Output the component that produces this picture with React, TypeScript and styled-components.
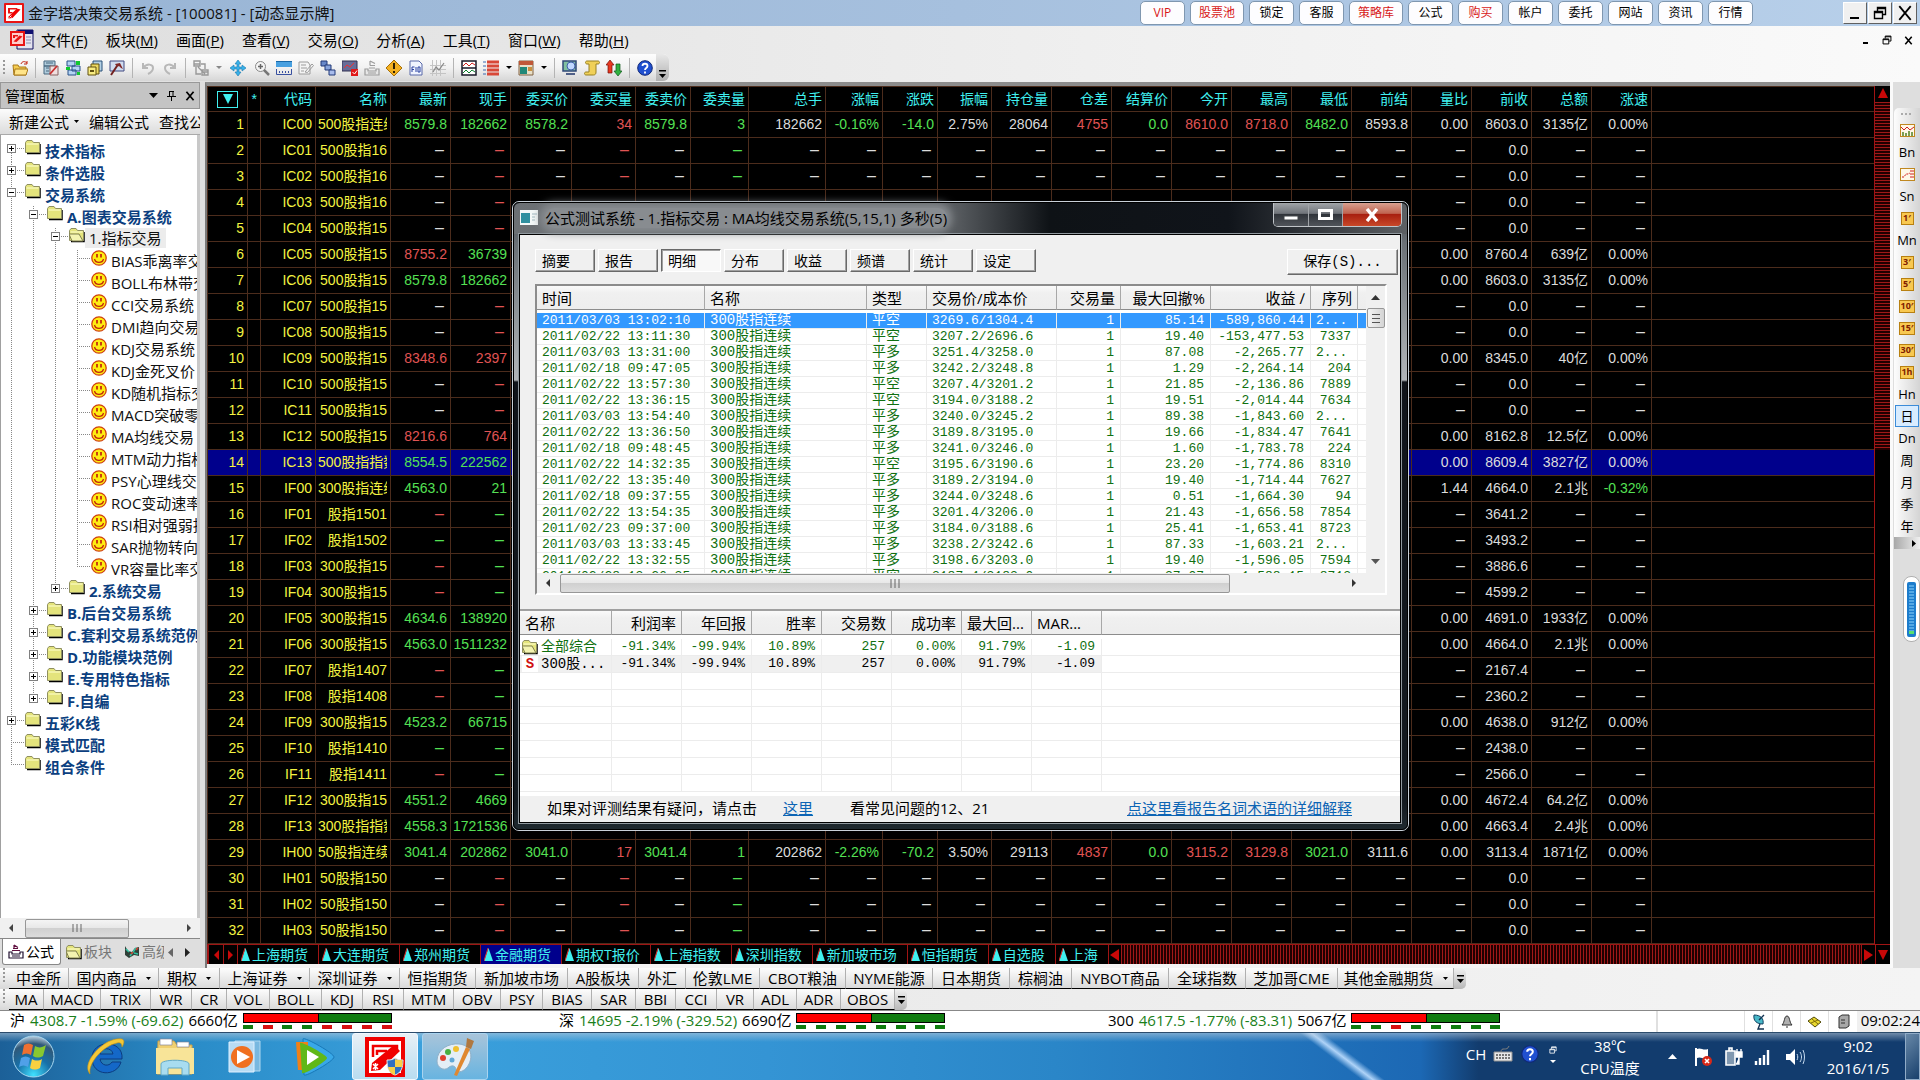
import React from "react";
import styled, { createGlobalStyle, css } from "styled-components";

const UI = `"Open Sans", "Noto Sans CJK SC", sans-serif`;
const GRID = `"Liberation Sans", "Noto Sans CJK SC", sans-serif`;
const MONO = `"Liberation Mono", "Noto Sans CJK SC", monospace`;

const C: Record<string, string> = {
  g: "#54e054",
  r: "#e05454",
  w: "#dcdcdc",
  y: "#f4f442",
  c: "#40f0f0",
};
const GRID_LINE = "#4c2c1c";

const Global = createGlobalStyle`
  *, *::before, *::after { box-sizing: border-box; }
  html, body { margin: 0; padding: 0; background: #f0f0f0; }
  body { font-family: ${UI}; font-size: 15px; line-height: 20px; color: #000; overflow-x: hidden; }
  button { font: inherit; color: inherit; margin: 0; padding: 0; border: 0; background: none; white-space: nowrap; }
  table { border-collapse: separate; border-spacing: 0; table-layout: fixed; }
  th { font-weight: 400; }
  th, td { padding: 0; }
  svg { display: block; flex: none; }
`;

const Screen = styled.div`
  position: relative;
  display: flex;
  flex-direction: column;
  min-height: 100vh;
  overflow: hidden;
`;

/* ---------- title bar ---------- */
const TitleBar = styled.header`
  display: flex;
  align-items: center;
  height: 26px;
  padding: 0 3px 0 4px;
  background: linear-gradient(90deg, #98b4d4, #a6c0de 50%, #b8d0ea);
`;
const Title = styled.h1`
  margin: 0 auto 0 4px;
  font-size: 15px;
  font-weight: 400;
  color: #111;
`;
const Quick = styled.nav`
  display: flex;
  gap: 5px;
  margin-right: 90px;
`;
const QuickButton = styled.button<{ $hot?: boolean }>`
  min-width: 45px;
  height: 24px;
  padding: 0 8px;
  border: 1px solid #7f97b0;
  border-radius: 5px;
  background: #fdfdff;
  font-size: 12px;
  line-height: 20px;
  color: ${(p) => (p.$hot ? "#d81818" : "#000")};
`;
const SysButtons = styled.div<{ $flat?: boolean }>`
  display: flex;
  gap: ${(p) => (p.$flat ? "5px" : "1px")};
  button {
    display: grid;
    place-items: center;
    width: ${(p) => (p.$flat ? "16px" : "24px")};
    height: ${(p) => (p.$flat ? "16px" : "22px")};
    ${(p) =>
      !p.$flat &&
      css`
        background: #f0f0f0;
        border: 1px solid;
        border-color: #fff #606060 #606060 #fff;
      `}
  }
`;

/* ---------- menu and toolbar ---------- */
const MenuBar = styled.nav`
  display: flex;
  align-items: center;
  height: 28px;
  padding: 0 4px 0 10px;
  background: linear-gradient(90deg, #dedede, #f0f0f0 60%, #fafafa);
`;
const MenuItem = styled.button`
  margin-right: 18px;
  line-height: 24px;
  &:first-of-type { margin-left: 7px; }
`;
const Spacer = styled.div`
  flex: 1;
`;
const ToolArea = styled.div`
  height: 28px;
  background: linear-gradient(90deg, #dedede, #f0f0f0 60%, #fafafa);
`;
const ToolStrip = styled.div`
  display: inline-flex;
  align-items: center;
  height: 27px;
  border-radius: 0 6px 6px 0;
  background: linear-gradient(#fdfdfd, #f2f2f2 50%, #d6d6d6);
`;
const Grip = styled.span`
  width: 2px;
  height: 16px;
  margin: 0 4px 0 3px;
  background: repeating-linear-gradient(#999 0 2px, transparent 2px 4px);
`;
const Tool = styled.button<{ $w?: number }>`
  display: grid;
  place-items: center;
  width: ${(p) => p.$w ?? 22}px;
  height: 24px;
`;
const Sep = styled.span`
  width: 1px;
  height: 20px;
  margin: 0 4px;
  background: #b4b4b4;
`;
const EndCap = styled.button`
  display: grid;
  place-items: end center;
  width: 13px;
  height: 27px;
  padding-bottom: 3px;
  border-radius: 0 6px 6px 0;
  background: linear-gradient(#e8e8e8, #b0b0b0);
`;

/* ---------- middle ---------- */
const Main = styled.main`
  display: flex;
  flex: 1;
  background: #dedede;
`;
const Panel = styled.aside`
  display: flex;
  flex-direction: column;
  width: 200px;
  overflow: hidden;
  flex: none;
`;
const PanelHead = styled.div`
  display: flex;
  align-items: center;
  gap: 9px;
  height: 27px;
  padding: 0 4px;
  border: 1px solid #989898;
  background: #c4c4c4;
  h2 { margin: 0 auto 0 0; font-size: 15px; font-weight: 400; }
`;
const PanelTools = styled.div`
  display: flex;
  align-items: center;
  gap: 10px;
  height: 26px;
  padding-left: 9px;
  border-bottom: 1px solid #aaa;
  background: linear-gradient(#fcfcfc, #dcdcdc);
  overflow: hidden;
  button { display: flex; align-items: center; gap: 5px; }
`;
const Tree = styled.ul`
  flex: 1;
  margin: 0;
  padding: 5px 0 0;
  list-style: none;
  background: #fff;
  border: solid #a0a0a0;
  border-width: 0 3px 0 1px;
  border-right-color: #c8c8c8;
  overflow: hidden;
`;
const TreeRow = styled.li<{ $leaf: boolean; $open: boolean }>`
  display: flex;
  height: 22px;
  margin-left: -1px;
  white-space: nowrap;
  font-weight: ${(p) => (p.$leaf || p.$open ? 400 : 700)};
  color: ${(p) => (p.$leaf || p.$open ? "#111" : "#0c3f80")};
  span {
    margin-top: ${(p) => (p.$open ? "0" : "1px")};
    padding: 0 4px;
    height: 20px;
    line-height: 20px;
    background: ${(p) => (p.$open ? "#ececec" : "none")};
  }
`;
const HScroll = styled.div`
  display: flex;
  align-items: center;
  height: 20px;
  padding: 0 9px;
  background: #f0f0f0;
  justify-content: space-between;
`;
const Thumb = styled.div<{ $grow: number }>`
  display: grid;
  place-items: center;
  flex: ${(p) => p.$grow};
  height: 19px;
  border: 1px solid #979797;
  border-radius: 2px;
  background: linear-gradient(#f4f4f4, #e8e8e8 45%, #d0d0d0 50%, #dcdcdc);
`;
const Rest = styled.div<{ $grow: number }>`
  flex: ${(p) => p.$grow};
`;
const PanelTabs = styled.div`
  display: flex;
  align-items: flex-start;
  height: 30px;
  padding-left: 2px;
  border-top: 1px solid #888;
  font-size: 14px;
  color: #777;
`;
const PanelTab = styled.button<{ $on?: boolean; $w: number }>`
  display: flex;
  align-items: center;
  gap: 2px;
  width: ${(p) => p.$w}px;
  height: 26px;
  padding-left: 5px;
  overflow: hidden;
  ${(p) =>
    p.$on &&
    css`
      color: #000;
      background: #fff;
      border: 1px solid #888;
      border-top: 0;
      border-radius: 0 0 3px 3px;
    `}
`;
const PanelArrows = styled.div`
  display: flex;
  align-items: center;
  gap: 12px;
  height: 26px;
  padding-left: 4px;
`;

const Quotes = styled.section`
  flex: 1;
  min-width: 0;
  margin-left: 5px;
  border: solid #7a7a7a;
  border-width: 4px 0 0 2px;
  background: #000;
  border-top-color: #8c8c8c;
  display: flex;
  flex-direction: column;
`;
const QuoteBody = styled.div`
  display: flex;
`;
const QuoteTable = styled.table`
  flex: 1;
  width: 0;
  font-family: ${GRID};
  font-size: 14px;
  line-height: 25px;
  border-left: 1px solid ${GRID_LINE};
  border-top: 1px solid ${GRID_LINE};
  th, td {
    height: 26px;
    border-right: 1px solid ${GRID_LINE};
    border-bottom: 1px solid ${GRID_LINE};
    text-align: right;
    white-space: nowrap;
  }
  th { color: ${C.c}; height: 25px; }
  th > div { height: 24px; }
  th:last-child, td:last-child { border-right: 0; }
`;
const QuoteRow = styled.tr<{ $on: boolean }>`
  background: ${(p) => (p.$on ? "#00008c" : "transparent")};
`;
const Cell = styled.div<{ $c: string }>`
  padding: 0 3px 0 2px;
  height: 25px;
  overflow: hidden;
  color: ${(p) => C[p.$c]};
`;
const Clip = styled.div`
  overflow: hidden;
`;
const Dash = styled.span`
  font-size: 16px;
  line-height: 20px;
  padding-right: 3px;
`;
const FilterButton = styled.button`
  display: grid;
  place-items: center;
  width: 21px;
  height: 17px;
  margin: 0 9px;
  border: 1px solid ${C.c};
`;
const VRail = styled.div`
  display: flex;
  flex-direction: column;
  align-items: center;
  width: 16px;
  padding-top: 2px;
  border-left: 1px solid #a01414;
`;
const VHatch = styled.div`
  width: 15px;
  height: 348px;
  margin-top: 2px;
  background: repeating-linear-gradient(#a01818 0 1px, #200000 1px 3px);
`;
const MarketTabs = styled.div`
  display: flex;
  height: 20px;
  border-top: 1px solid #a01414;
  border-left: 1px solid #a01414;
  font-size: 14px;
  line-height: 18px;
  color: ${C.c};
`;
const MarketTab = styled.button<{ $on?: boolean }>`
  display: flex;
  align-items: center;
  gap: 2px;
  padding: 0 10px 0 3px;
  border-left: 1px solid #a01414;
  background: ${(p) => (p.$on ? "#00008c" : "none")};
`;
const Arrow = styled.button<{ $w: number }>`
  display: grid;
  place-items: center;
  width: ${(p) => p.$w}px;
  border-left: 1px solid #a01414;
`;
const HHatch = styled.div`
  flex: 1;
  background: repeating-linear-gradient(90deg, #a01818 0 1px, #200000 1px 3px);
`;
const Below = styled.div`
  flex: 1;
  min-height: 3px;
  background: #f4f4f4;
`;

const Rail = styled.aside`
  width: 30px;
  flex: none;
  padding: 26px 0 0 4px;
  border-left: 3px solid #fafafa;
  background: #dedede;
  overflow: hidden;
`;
const RailStrip = styled.div`
  display: flex;
  flex-direction: column;
  align-items: center;
  border-radius: 5px 0 0 5px;
  margin-left: -3px;
  background: linear-gradient(90deg, #fdfdfd, #e4e4e4 60%, #d4d4d4);
`;
const RailDots = styled.span`
  width: 12px;
  height: 2px;
  margin: 5px 0 4px;
  background: repeating-linear-gradient(90deg, #aaa 0 2px, transparent 2px 4px);
`;
const RailButton = styled.button<{ $on?: boolean }>`
  display: grid;
  place-items: center;
  width: 24px;
  height: 22px;
  font-size: 13px;
  line-height: 18px;
  ${(p) => p.$on && "border: 1px solid #3c8cd8; background: #d8ecff;"}
`;
const Period = styled.span`
  display: grid;
  place-items: center;
  min-width: 13px;
  height: 13px;
  border: 1px solid #b88010;
  background: #f8c850;
  font-size: 9px;
  font-weight: 700;
  line-height: 10px;
  color: #802000;
`;
const RailEnd = styled.div`
  display: flex;
  justify-content: flex-end;
  align-items: center;
  width: 26px;
  height: 12px;
  padding-right: 4px;
  background: linear-gradient(90deg, #a8a8a8, #f0f0f0);
`;
const Gauge = styled.div`
  width: 17px;
  height: 66px;
  margin: 27px 0 0 6px;
  padding: 5px 3px;
  border: 1px solid #b0b0b0;
  border-radius: 8px;
  background: #fff;
  div {
    height: 55px;
    border: solid #1c7ccc;
    border-width: 3px 2px;
    border-radius: 2px;
    background: linear-gradient(transparent 46px, #58e070 46px), repeating-linear-gradient(#54a8e4 0 2px, #1c7ccc 2px 3px);
  }
`;

/* ---------- lower bars ---------- */
const LinkBar = styled.nav`
  display: flex;
  align-items: flex-start;
  background: linear-gradient(90deg, #e4e4e4, #f4f4f4);
`;
const LinkStrip = styled.div`
  display: flex;
  align-items: stretch;
  background: linear-gradient(#fdfdfd, #d8d8d8);
  border-radius: 0 5px 5px 0;
`;
const BarItem = styled.button<{ $w: number }>`
  display: flex;
  align-items: center;
  justify-content: center;
  gap: 9px;
  width: ${(p) => p.$w}px;
  height: 21px;
  border-bottom: 1px solid #000;
  border-right: 1px solid #b0b0b0;
  line-height: 20px;
`;
const BarEnd = styled.button`
  display: grid;
  place-items: center;
  width: 12px;
  height: 21px;
  border-radius: 0 5px 5px 0;
  background: linear-gradient(#f0f0f0, #b8b8b8);
`;
const StatusBar = styled.footer`
  display: flex;
  height: 22px;
  border-top: 1px solid #888;
  background: #fff;
  line-height: 19px;
  overflow: hidden;
`;
const Sections = styled.div`
  display: flex;
  flex: 1;
  margin-right: 9px;
`;
const Section = styled.div`
  display: flex;
  flex: 1;
  gap: 5px;
  padding-left: 10px;
  white-space: nowrap;
  em { font-style: normal; color: #1a801a; }
`;
const Breadth = styled.div`
  padding-top: 2px;
`;
const Split = styled.div`
  display: flex;
  width: 149px;
  height: 10px;
  border: 1px solid #000;
  background: linear-gradient(90deg, #f00 0 74px, #000 74px 75px, #107c10 75px);
`;
const Marks = styled.div`
  display: flex;
  justify-content: space-between;
  padding-top: 2px;
`;
const Mark = styled.i<{ $up: boolean }>`
  width: 10px;
  height: 4px;
  background: ${(p) => (p.$up ? "#d81010" : "#107c10")};
`;
const StatusIcons = styled.div`
  display: flex;
  width: 264px;
  padding-left: 86px;
  border-left: 2px solid #e0e0e0;
  span { display: grid; place-items: center; width: 30px; border-left: 1px solid #e0e0e0; }
  time { padding-left: 4px; background: #f0f0f0; }
`;

/* ---------- taskbar ---------- */
const Taskbar = styled.footer`
  display: flex;
  align-items: stretch;
  height: 48px;
  border-top: 1px solid #2c4c6c;
  color: #fff;
  background:
    linear-gradient(rgba(190, 205, 220, 0.55), rgba(190, 205, 220, 0) 9px),
    linear-gradient(90deg, transparent 74%, #123c6e 77%),
    linear-gradient(37deg, transparent 38px, rgba(190, 222, 255, 0.9) 45px, transparent 52px) 1300px 0 / 100px 48px no-repeat,
    linear-gradient(90deg, #1c6098, #2a8cc8 10%, #3aa0dc 22%, #3494d4 40%, #2a86c8 55%, #1c68b4 74%);
`;
const Start = styled.button`
  width: 72px;
  padding-left: 12px;
`;
const Tasks = styled.div`
  display: flex;
  gap: 4px;
`;
const Task = styled.button<{ $state?: "active" | "open" }>`
  display: grid;
  place-items: center;
  width: 66px;
  border-radius: 3px;
  ${(p) => p.$state === "active" && "border: 1px solid #f0f8ff; background: linear-gradient(#e8f0f6, #b8dcf0);"}
  ${(p) => p.$state === "open" && "border: 1px solid #a8d4f0; background: linear-gradient(#a8c4da, #68b4e0);"}
`;
const Tray = styled.div`
  display: flex;
  margin-left: auto;
  font-size: 15px;
  text-align: center;
`;
const TrayItem = styled.div<{ $w: number; $high?: boolean }>`
  display: grid;
  place-content: center;
  justify-items: center;
  gap: 6px;
  width: ${(p) => p.$w}px;
  padding-bottom: ${(p) => (p.$high ? "5px" : "0")};
  line-height: 16px;
`;
const Lines = styled.div<{ $w: number }>`
  width: ${(p) => p.$w}px;
  padding-top: 2px;
  line-height: 22px;
`;
const Peek = styled.button`
  width: 15px;
  border: 1px solid #90acc8;
  background: linear-gradient(135deg, #6888a8, #18406c);
`;

/* ---------- dialog ---------- */
const Dialog = styled.section`
  position: absolute;
  left: 512px;
  top: 201px;
  width: 897px;
  padding: 1px 7px 7px 6px;
  border: 1px solid #c8d0d8;
  border-radius: 7px;
  outline: 1px solid #000;
  outline-offset: -2px;
  background: linear-gradient(#3a4046, #6a7076 40px, #a8acb0 160px, #b0b4b8 178px, #10141a 180px, #141a20 600px, #202a30);
`;
const DialogTitle = styled.div`
  display: flex;
  align-items: center;
  height: 31px;
  margin: 0 -6px 0 -5px;
  padding: 0 0 2px 6px;
  border-radius: 6px 6px 0 0;
  background: linear-gradient(90deg, #6c7074, #54585c 50%, #0e1216 60%, #10141a 80%, #5c6064);
  h2 {
    margin: 0 auto 0 7px;
    font-size: 15px;
    font-weight: 400;
    color: #000;
    border-radius: 9px;
    background: #888c90;
    box-shadow: 0 0 8px 5px #888c90;
    line-height: 20px;
  }
`;
const CaptionButtons = styled.div`
  display: flex;
  align-self: flex-start;
  margin-right: 5px;
  border: 1px solid #c0c4c8;
  border-top: 0;
  border-radius: 0 0 5px 5px;
  overflow: hidden;
`;
const Caption = styled.button<{ $close?: boolean }>`
  display: grid;
  place-items: center;
  width: ${(p) => (p.$close ? 59 : 34)}px;
  height: 23px;
  border-left: 1px solid #a0a4a8;
  background: ${(p) =>
    p.$close ? "linear-gradient(#d8a090, #c06450 45%, #a82010 50%, #c84828)" : "linear-gradient(#a0a4a8, #70747a 45%, #30343a 50%, #50545a)"};
  &:first-child { border-left: 0; }
`;
const DialogBody = styled.div`
  border: 1px solid #000;
  outline: 1px solid #90989e;
  background: #f0f0f0;
`;
const DialogTools = styled.div`
  display: flex;
  align-items: flex-start;
  justify-content: space-between;
  padding: 14px 2px 9px 15px;
  font-size: 14px;
`;
const Tabs = styled.div`
  display: flex;
  gap: 3px;
`;
const raised = css`
  border: 1px solid;
  border-color: #fff #696969 #696969 #fff;
  box-shadow: inset -1px -1px #a0a0a0;
`;
const Tab = styled.button<{ $on?: boolean }>`
  width: 60px;
  height: 23px;
  padding-left: 6px;
  text-align: left;
  line-height: 18px;
  ${raised}
  ${(p) =>
    p.$on &&
    css`
      border-color: #696969 #fff #fff #696969;
      box-shadow: inset 1px 1px #a0a0a0;
      background: #f8f8f8;
    `}
`;
const Save = styled.button`
  width: 111px;
  height: 26px;
  font-family: ${MONO};
  ${raised}
`;
const ListFrame = styled.div`
  margin: 0 13px 0 15px;
  border: 2px solid;
  border-color: #8c8c8c #fff #fff #8c8c8c;
  background: #fff;
`;
const ListTop = styled.div`
  display: flex;
  height: 287px;
`;
const ListClip = styled.div`
  flex: 1;
  min-width: 0;
  overflow: hidden;
`;
const ListTable = styled.table<{ $pitch: number; $lead: number }>`
  width: 100%;
  font-family: ${MONO};
  font-size: 13px;
  line-height: ${(p) => p.$pitch - 1}px;
  th {
    height: 24px;
    font-family: ${UI};
    font-size: 15px;
    line-height: 20px;
    text-align: left;
    border-right: 1px solid #a8a8a8;
    border-bottom: 1px solid #8c8c8c;
    background: linear-gradient(#fafafa, #f0f0f0 30%, #ededed);
    padding: 0 5px;
    white-space: nowrap;
    overflow: hidden;
  }
  td {
    height: ${(p) => p.$pitch}px;
    padding: 0 6px 0 5px;
    white-space: nowrap;
    overflow: hidden;
    border-right: 1px solid #ececec;
    border-bottom: 1px solid #ececec;
  }
  th:last-child, td:last-child { border-right: 0; }
  tbody::before { content: ""; display: block; height: ${(p) => p.$lead}px; }
`;
const TradeRow = styled.tr<{ $on: boolean }>`
  color: ${(p) => (p.$on ? "#fff" : "#107010")};
  background: ${(p) => (p.$on ? "#3399ff" : "#fff")};
`;
const Num = styled.td`
  text-align: right;
`;
const NumHead = styled.th`
  && { text-align: right; }
`;
const Cjk = styled.td`
  font-size: 14px;
`;
const VScroll = styled.div`
  display: flex;
  flex-direction: column;
  align-items: center;
  width: 19px;
  padding: 9px 0;
  background: #f0f0f0;
`;
const VThumb = styled.div`
  display: grid;
  place-items: center;
  width: 18px;
  height: 20px;
  margin: 8px 0 auto;
  border: 1px solid #979797;
  border-radius: 2px;
  background: linear-gradient(90deg, #f4f4f4, #d4d4d4);
`;
const Summary = styled.div`
  margin-top: 14px;
  height: 187px;
  border-top: 2px solid #a0a0a0;
  background: #fff;
  overflow: hidden;
`;
const SummaryRow = styled.tr<{ $tone: string }>`
  color: ${(p) => (p.$tone === "green" ? "#107010" : "#000")};
  td:not(:last-child) { background: ${(p) => (p.$tone === "sel" ? "#f0f0f0" : "#fff")}; }
`;
const NameCell = styled.div`
  display: flex;
  align-items: center;
  gap: 3px;
  margin: 0 -5px 0 -3px;
  font-size: 14px;
  b { width: 16px; background: #fff; color: #d01010; text-align: center; }
`;
const DialogFoot = styled.div`
  display: flex;
  align-items: center;
  height: 26px;
  padding: 0 48px 2px 27px;
  a { color: #0c64b4; }
  a:last-child { margin-left: auto; }
  span { margin: 0 35px 0 0; }
  a + span { margin-left: 37px; }
  span:first-child { margin-right: 26px; }
`;

/* ---------- drawings ---------- */
const Tri = ({ d, s = 7, c = "#000" }: { d: "u" | "d" | "l" | "r"; s?: number; c?: string }) => {
  const h = Math.ceil(s / 2);
  const wide = d === "u" || d === "d";
  const pts = {
    u: `0,${h} ${s},${h} ${s / 2},0`,
    d: `0,0 ${s},0 ${s / 2},${h}`,
    l: `${h},0 ${h},${s} 0,${s / 2}`,
    r: `0,0 0,${s} ${h},${s / 2}`,
  }[d];
  return (
    <svg width={wide ? s : h} height={wide ? h : s} aria-hidden>
      <polygon points={pts} fill={c} />
    </svg>
  );
};
const BigTri = ({ d, c = "#c80808" }: { d: "u" | "d" | "l" | "r"; c?: string }) => {
  const pts = { u: "1,10 11,10 6,0", d: "1,1 11,1 6,11", l: "10,0 10,12 1,6", r: "1,0 1,12 10,6" }[d];
  return (
    <svg width="12" height="12" aria-hidden>
      <polygon points={pts} fill={c} />
    </svg>
  );
};
const AppIcon = ({ size }: { size: number }) => (
  <svg width={size} height={size} viewBox="0 0 20 20" aria-hidden>
    <rect width="20" height="20" rx="1" fill="#e81414" />
    <rect x="2" y="2" width="16" height="16" fill="#fff" />
    <path d="M4 5h9v1.500H6V9h3l-1.500 1.500H4z" fill="#e81414" />
    <path d="M4.500 13.500 13 5.500l3.500 1-8 8.500-4 .5z" fill="#f00000" />
    <path d="m5.500 12.500 2 2m0-2-2 2" stroke="#fff" strokeWidth=".8" />
  </svg>
);
const DocIcon = () => (
  <svg width="24" height="22" viewBox="0 0 24 22" aria-hidden>
    <path d="M8 1h15v19H7V1z" fill="#e4e4ee" stroke="#101060" />
    <path d="M8 1h15v4H8z" fill="#101070" />
    <path d="M16 8h5M16 11h5M16 14h5" stroke="#8c8cb0" />
    <rect x="0" y="2" width="15" height="15" fill="#e81414" />
    <rect x="2" y="4" width="11" height="11" fill="#fcc" />
    <path d="m3.500 12.500 6-6 3 1-6 5.500z" fill="#e81414" />
    <path d="M3 6h5v1.500H5V9H3z" fill="#e81414" />
  </svg>
);
const MinGlyph = ({ flat }: { flat?: boolean }) => (
  <svg width="14" height="14" viewBox="0 0 14 14" aria-hidden>
    <path d={flat ? "M4 10h5" : "M2 12h9"} stroke="#000" strokeWidth="2" />
  </svg>
);
const RestoreGlyph = ({ s = 14, c = "#000" }: { s?: number; c?: string }) => (
  <svg width={s} height={s} viewBox="0 0 14 14" aria-hidden>
    <path d="M4.500 5V1.500h8v7H10M4.500 2.500h8M1.500 5.500h8v7h-8zM1.500 6.500h8" fill="none" stroke={c} strokeWidth="1.400" />
  </svg>
);
const CloseGlyph = ({ s = 14, c = "#000", w = 2 }: { s?: number; c?: string; w?: number }) => (
  <svg width={s} height={s} viewBox="0 0 14 14" aria-hidden>
    <path d="m2 1 10 12M12 1 2 13" stroke={c} strokeWidth={w} />
  </svg>
);
const MoreGlyph = () => (
  <svg width="7" height="8" aria-hidden>
    <path d="M0 0h7v1.500H0zM0 4h7L3.500 8z" fill="#000" />
  </svg>
);

const toolArt: Record<string, React.ReactNode> = {
  open: (
    <>
      <path d="M1 5h5l1 2h7v8H2z" fill="#f4cc50" stroke="#a87818" />
      <path d="M3 9h13l-2 6H2z" fill="#ffe488" stroke="#a87818" />
      <path d="M9 4c1-3 4-3 6-1m0-2v3h-3" fill="none" stroke="#c02010" />
    </>
  ),
  sheet: (
    <>
      <path d="M1 1h11v5H1zM1 6h7v8H1z" fill="#b0ccdc" stroke="#486880" />
      <path d="M3 3h7M3 8h3M3 11h3" stroke="#486880" />
      <path d="M7 6h8v9H7z" fill="#f0e0e0" stroke="#886060" />
      <path d="m7 14 7-8" stroke="#c83030" strokeWidth="1.800" />
    </>
  ),
  net: (
    <>
      <path d="M2 1h8v5H2zM7 6h8v5H7zM3 10h8v5H3z" fill="#b4d4f4" stroke="#285088" />
      <path d="M11 1h4v4h-4zM1 7h4v3H1zM12 12h3v3h-3z" fill="#10c830" />
    </>
  ),
  files: (
    <>
      <path d="M6 1h9v10H6z" fill="#b4d0e4" stroke="#285078" />
      <path d="M4 4h8v10H4z" fill="#ecd860" stroke="#605010" />
      <path d="M1 7h8v8H1z" fill="#f8ec80" stroke="#605010" />
      <path d="M3 10h4v2H3z" fill="#605010" />
    </>
  ),
  hammer: (
    <>
      <path d="M1 1h14v10H1z" fill="#d0dcf0" stroke="#404880" />
      <path d="m2 15 6-9" stroke="#702020" strokeWidth="2" />
      <path d="m6 4 5-1 3 6-2-1-2-2-2 1z" fill="#802828" />
    </>
  ),
  undo: <path d="M3 3v5h5M3 8c4-5 10-4 10 0 0 3-3 5-5 6" fill="none" stroke="#b8b8b8" strokeWidth="2" />,
  redo: <path d="M13 3v5H8M13 8C9 3 3 4 3 8c0 3 3 5 5 6" fill="none" stroke="#b8b8b8" strokeWidth="2" />,
  link: <path d="M1 1h6v5H1zM9 10h6v5H9zM1 4h6M9 12h6M3 7v7h5M5 7l7 7M12 9V4H8" fill="none" stroke="#989898" strokeWidth="1.400" />,
  move: <path d="m8 0 3 4H9v3h3V5l4 3-4 3V9H9v3h2l-3 4-3-4h2V9H4v2L0 8l4-3v2h3V4H5z" fill="#38b0e8" stroke="#1878b0" strokeWidth=".6" />,
  zoom: (
    <>
      <circle cx="6.500" cy="6.500" r="5" fill="#f4f4f4" stroke="#888" />
      <path d="M4 6.500h5M6.500 4v5" stroke="#666" strokeWidth="1.500" />
      <path d="m10 10 5 5" stroke="#777" strokeWidth="2.500" />
    </>
  ),
  ruler: (
    <>
      <path d="M0 1h16v6H0z" fill="#48a0e0" />
      <path d="M0 1.500h16" stroke="#1868a8" />
      <path d="M.5 9v5.500h15V9" fill="none" stroke="#3850a0" />
      <path d="M3 12h11" stroke="#3850a0" strokeDasharray="1 2" strokeWidth="2" />
    </>
  ),
  edit: <path d="M1 2h9l2 3v9H1zM3 5h5M3 8h6M3 11h3M7 12l7-8 1.500 1.500-6 7z" fill="#f4f4f4" stroke="#9c9c9c" />,
  steps: (
    <>
      <path d="M1 1h6v5H1z" fill="#6888c8" stroke="#203878" />
      <path d="M5 5h6v5H5z" fill="#88a4dc" stroke="#203878" />
      <path d="M9 10h6v5H9z" fill="#a8bcec" stroke="#203878" />
    </>
  ),
  chart: (
    <>
      <path d="M0 1h15v10H0z" fill="#686c98" stroke="#303050" />
      <path d="m2 8 3-3 3 2 4-4" fill="none" stroke="#f03030" />
      <path d="M9 9h7v7H9z" fill="#e01818" />
      <path d="m10.500 12 2 2 2.500-3.500" fill="none" stroke="#fff" />
    </>
  ),
  stamp: <path d="M1 9h3v2h8V9h3v6H1zM4 13h8M5 8h6M6 5.500h5M6 1l5 2.500M6 1v4.500" fill="none" stroke="#9c9c9c" strokeWidth="1.200" />,
  warn: (
    <>
      <path d="m8 0 8 8-8 8-8-8z" fill="#f4b020" stroke="#a87008" />
      <path d="M8 3v6M8 11v2" stroke="#302000" strokeWidth="2" />
    </>
  ),
  fin: (
    <>
      <path d="M2 1h9l3 3v11H2z" fill="#f0f4ff" stroke="#5868a8" />
      <path d="M4 12V7h2.500M4 9.500h2M8 7v5M10 7h2v5h-2z" fill="none" stroke="#2840a0" />
    </>
  ),
  graph: (
    <>
      <path d="M2.500 0v16M0 13.500h16M6.500 0v16M0 9.500h16M0 5.500h16M10.500 0v16" fill="none" stroke="#c4c4c4" />
      <path d="m3 12 3-5 3 3 5-7" fill="none" stroke="#888" strokeWidth="1.200" />
    </>
  ),
  split: (
    <>
      <path d="M1 1h14v14H1zM1 8h14" fill="#fff" stroke="#181828" strokeWidth="1.500" />
      <path d="m2 6 3-3 3 3 3-3 3 2" fill="none" stroke="#d02020" />
      <path d="m2 13 3-3 3 3 3-3 3 2" fill="none" stroke="#108030" />
    </>
  ),
  list: (
    <>
      <path d="M4 2h12M4 6h12M4 10h12M4 14h12" stroke="#d84838" strokeWidth="3" />
      <path d="M0 2h3M0 6h3M0 10h3M0 14h3" stroke="#3868b0" />
    </>
  ),
  layout: (
    <>
      <path d="M1 1h14v14H1z" fill="#e8e0c8" stroke="#806040" />
      <path d="M1 1h14v4H1z" fill="#c05838" />
      <path d="M2 7h7v7H2z" fill="#208878" />
      <path d="M10 7h4v4h-4z" fill="#c89040" />
    </>
  ),
  monitor: (
    <>
      <path d="M1 1h13v10H1z" fill="#80c0a0" stroke="#304878" strokeWidth="1.500" />
      <circle cx="9" cy="6" r="4" fill="#c0d8ff" stroke="#4060a8" />
      <path d="M4 14h9" stroke="#506088" strokeWidth="2" />
    </>
  ),
  scroll: <path d="M3 1h11c2 0 2 3 0 3h-2v8c0 3-2 3-3 3H2c-2 0-2-3 0-3h3V4H3C1 4 1 1 3 1z" fill="#f0d058" stroke="#988020" />,
  updown: (
    <>
      <path d="m4 0 4 5H6v8H2V5H0z" fill="#e83820" stroke="#701008" strokeWidth=".7" />
      <path d="m12 16 4-5h-2V4h-4v7H8z" fill="#30b040" stroke="#105818" strokeWidth=".7" />
    </>
  ),
  help: (
    <>
      <circle cx="8" cy="8" r="7.300" fill="#2050d0" stroke="#102878" />
      <path d="M5.500 6c0-3 5-3 5 0 0 2-2.500 2-2.500 4M8 11.500v2" fill="none" stroke="#fff" strokeWidth="1.800" />
    </>
  ),
};
const Art = ({ n, s = 16 }: { n: string; s?: number }) => (
  <svg width={s} height={s} viewBox="0 0 16 16" aria-hidden>
    {toolArt[n]}
  </svg>
);

const Folder = ({ open }: { open?: boolean }) => (
  <svg width="16" height="15" viewBox="0 0 16 15" aria-hidden>
    <path d="M2 13.500h13V4" fill="none" stroke="#000" strokeWidth="1.500" />
    <path d="M.5 12.500v-10l1.500-2h5l1.500 2h6v10z" fill="#e4e47c" stroke="#909060" />
    <path d="M1.500 4h12" stroke="#ffffd0" />
    {open && <path d="M0 6h10l4 7H3z" fill="#f4f4b0" stroke="#808050" />}
  </svg>
);
const Smile = () => (
  <svg width="16" height="16" viewBox="0 0 16 16" aria-hidden>
    <circle cx="8" cy="8" r="7.200" fill="#ffee10" stroke="#d04010" strokeWidth="1.300" />
    <path d="M6 4v3.500M10 4v3.500" stroke="#c02010" strokeWidth="1.700" />
    <path d="M3.500 9c1 4.500 8 4.500 9 0" fill="none" stroke="#c02010" strokeWidth="1.200" />
  </svg>
);
const Guide = ({ on }: { on: boolean }) => (
  <svg width="22" height="22" aria-hidden>
    {on && <path d="M11.500 0v22" stroke="#888" strokeDasharray="1 1" />}
  </svg>
);
const Node = ({ first, last, box }: { first?: boolean; last?: boolean; box?: string }) => (
  <svg width="25" height="22" aria-hidden>
    <path d={`M11.500 ${first ? 9 : 0}V${last ? 9 : 22}M11 8.500h13`} stroke="#888" strokeDasharray="1 1" fill="none" />
    {box && (
      <>
        <rect x="7.500" y="4.500" width="8" height="8" fill="#fff" stroke="#808080" />
        <path d={box === "+" ? "M9 8.500h5M11.500 6v5" : "M9 8.500h5"} stroke="#000" />
      </>
    )}
  </svg>
);

/* ---------- data ---------- */
const quick: [string, boolean?][] = [
  ["VIP", true], ["股票池", true], ["锁定"], ["客服"], ["策略库", true], ["公式"], ["购买", true], ["帐户"], ["委托"], ["网站"], ["资讯"], ["行情"],
];
const menus = [["文件", "F"], ["板块", "M"], ["画面", "P"], ["查看", "V"], ["交易", "O"], ["分析", "A"], ["工具", "T"], ["窗口", "W"], ["帮助", "H"]];
const tools =
  "open | sheet net files hammer | undo redo | link v move zoom ruler edit steps chart stamp warn fin graph | split list v layout v | monitor scroll updown | help".split(" ");

type TreeNode = { t: string; d: number; box?: string; last?: boolean; open?: boolean; lines: boolean[] };
const leafNames = [
  "BIAS乖离率交", "BOLL布林带交", "CCI交易系统", "DMI趋向交易", "KDJ交易系统", "KDJ金死叉价", "KD随机指标交", "MACD突破零", "MA均线交易",
  "MTM动力指标", "PSY心理线交", "ROC变动速率", "RSI相对强弱指", "SAR抛物转向", "VR容量比率交",
];
const tree: TreeNode[] = [
  { t: "技术指标", d: 0, box: "+", lines: [] },
  { t: "条件选股", d: 0, box: "+", lines: [] },
  { t: "交易系统", d: 0, box: "-", lines: [] },
  { t: "A.图表交易系统", d: 1, box: "-", lines: [true] },
  { t: "1.指标交易", d: 2, box: "-", open: true, lines: [true, true] },
  ...leafNames.map((t, i) => ({ t, d: 3, last: i === leafNames.length - 1, lines: [true, true, true] })),
  { t: "2.系统交易", d: 2, box: "+", last: true, lines: [true, true] },
  { t: "B.后台交易系统", d: 1, box: "+", lines: [true] },
  { t: "C.套利交易系统范例", d: 1, box: "+", lines: [true] },
  { t: "D.功能模块范例", d: 1, box: "+", lines: [true] },
  { t: "E.专用特色指标", d: 1, box: "+", lines: [true] },
  { t: "F.自编", d: 1, box: "+", last: true, lines: [true] },
  { t: "五彩K线", d: 0, box: "+", lines: [] },
  { t: "模式匹配", d: 0, lines: [] },
  { t: "组合条件", d: 0, last: true, lines: [] },
];

const widths = [40, 13, 55, 75, 60, 60, 61, 64, 55, 58, 77, 57, 55, 54, 60, 60, 60, 60, 60, 60, 60, 60, 60, 60, 60];
const heads = "代码 名称 最新 现手 委买价 委买量 委卖价 委卖量 总手 涨幅 涨跌 振幅 持仓量 仓差 结算价 今开 最高 最低 前结 量比 前收 总额 涨速".split(" ");
const midDash = "w– r– w– g– w– w– w– w– w– w– w– w– w– w– w–";
const midNone = "w w w w w w w w w w w w w w w";
const quiet = "w– r–";
/* each field: colour letter followed by its text */
const quotes: string[] = [
  "IC00 500股指连续 g8579.8 g182662 g8578.2 r34 g8579.8 g3 w182662 g-0.16% g-14.0 w2.75% w28064 r4755 g0.0 r8610.0 r8718.0 g8482.0 w8593.8 w0.00 w8603.0 w3135亿 w0.00%",
  `IC01 500股指16 ${quiet} ${midDash} w– w0.0 w– w–`,
  `IC02 500股指16 ${quiet} ${midDash} w– w0.0 w– w–`,
  `IC03 500股指16 ${quiet} ${midNone} w– w0.0 w– w–`,
  `IC04 500股指15 ${quiet} ${midNone} w– w0.0 w– w–`,
  `IC05 500股指15 r8755.2 g36739 ${midNone} w0.00 w8760.4 w639亿 w0.00%`,
  `IC06 500股指15 g8579.8 g182662 ${midNone} w0.00 w8603.0 w3135亿 w0.00%`,
  `IC07 500股指15 ${quiet} ${midNone} w– w0.0 w– w–`,
  `IC08 500股指15 ${quiet} ${midNone} w– w0.0 w– w–`,
  `IC09 500股指15 r8348.6 r2397 ${midNone} w0.00 w8345.0 w40亿 w0.00%`,
  `IC10 500股指15 ${quiet} ${midNone} w– w0.0 w– w–`,
  `IC11 500股指15 ${quiet} ${midNone} w– w0.0 w– w–`,
  `IC12 500股指15 r8216.6 r764 ${midNone} w0.00 w8162.8 w12.5亿 w0.00%`,
  `IC13 500股指指数 g8554.5 g222562 ${midNone} w0.00 w8609.4 w3827亿 w0.00%`,
  `IF00 300股指连续 g4563.0 g21 ${midNone} w1.44 w4664.0 w2.1兆 g-0.32%`,
  `IF01 股指1501 r– g– ${midNone} w– w3641.2 w– w–`,
  `IF02 股指1502 g– g– ${midNone} w– w3493.2 w– w–`,
  `IF03 300股指15 r– g– ${midNone} w– w3886.6 w– w–`,
  `IF04 300股指15 r– g– ${midNone} w– w4599.2 w– w–`,
  `IF05 300股指15 g4634.6 g138920 ${midNone} w0.00 w4691.0 w1933亿 w0.00%`,
  `IF06 300股指15 g4563.0 g1511232 ${midNone} w0.00 w4664.0 w2.1兆 w0.00%`,
  `IF07 股指1407 r– g– ${midNone} w– w2167.4 w– w–`,
  `IF08 股指1408 r– g– ${midNone} w– w2360.2 w– w–`,
  `IF09 300股指15 g4523.2 g66715 ${midNone} w0.00 w4638.0 w912亿 w0.00%`,
  `IF10 股指1410 g– g– ${midNone} w– w2438.0 w– w–`,
  `IF11 股指1411 r– g– ${midNone} w– w2566.0 w– w–`,
  `IF12 300股指15 g4551.2 g4669 ${midNone} w0.00 w4672.4 w64.2亿 w0.00%`,
  `IF13 300股指指数 g4558.3 g1721536 ${midNone} w0.00 w4663.4 w2.4兆 w0.00%`,
  "IH00 50股指连续 g3041.4 g202862 g3041.0 r17 g3041.4 g1 w202862 g-2.26% g-70.2 w3.50% w29113 r4837 g0.0 r3115.2 r3129.8 g3021.0 w3111.6 w0.00 w3113.4 w1871亿 w0.00%",
  `IH01 50股指150 ${quiet} ${midDash} w– w0.0 w– w–`,
  `IH02 50股指150 ${quiet} ${midDash} w– w0.0 w– w–`,
  `IH03 50股指150 ${quiet} ${midDash} w– w0.0 w– w–`,
];
const markets = ["上海期货", "大连期货", "郑州期货", "金融期货", "期权T报价", "上海指数", "深圳指数", "新加坡市场", "恒指期货", "自选股", "上海"];

const categories: [string, number, boolean?][] = [
  ["中金所", 60], ["国内商品", 90, true], ["期权", 61, true], ["上海证券", 90, true], ["深圳证券", 90, true], ["恒指期货", 76], ["新加坡市场", 92],
  ["A股板块", 71], ["外汇", 47], ["伦敦LME", 74], ["CBOT粮油", 86], ["NYME能源", 87], ["日本期货", 77], ["棕榈油", 62], ["NYBOT商品", 97],
  ["全球指数", 77], ["芝加哥CME", 92], ["其他金融期货", 116, true],
];
const indicators: [string, number][] = [
  ["MA", 35], ["MACD", 57], ["TRIX", 50], ["WR", 41], ["CR", 35], ["VOL", 43], ["BOLL", 52], ["KDJ", 41], ["RSI", 41], ["MTM", 50], ["OBV", 47],
  ["PSY", 42], ["BIAS", 49], ["SAR", 44], ["BBI", 40], ["CCI", 41], ["VR", 37], ["ADL", 43], ["ADR", 44], ["OBOS", 54],
];
const indexes = [
  { n: "沪", v: "4308.7 -1.59% (-69.62)", a: "6660亿", m: "01001111" },
  { n: "深", v: "14695 -2.19% (-329.52)", a: "6690亿", m: "00000000" },
  { n: "300", v: "4617.5 -1.77% (-83.31)", a: "5067亿", m: "00100000" },
];
const trades = `2011/03/03 13:02:10|平空|3269.6/1304.4|85.14|-589,860.44|2...
2011/02/22 13:11:30|平空|3207.2/2696.6|19.40|-153,477.53|7337
2011/03/03 13:31:00|平多|3251.4/3258.0|87.08|-2,265.77|2...
2011/02/18 09:47:05|平多|3242.2/3248.8|1.29|-2,264.14|204
2011/02/22 13:57:30|平空|3207.4/3201.2|21.85|-2,136.86|7889
2011/02/22 13:36:15|平空|3194.0/3188.2|19.51|-2,014.44|7634
2011/03/03 13:54:40|平多|3240.0/3245.2|89.38|-1,843.60|2...
2011/02/22 13:36:50|平多|3189.8/3195.0|19.66|-1,834.47|7641
2011/02/18 09:48:45|平多|3241.0/3246.0|1.60|-1,783.78|224
2011/02/22 14:32:35|平空|3195.6/3190.6|23.20|-1,774.86|8310
2011/02/22 13:35:40|平多|3189.2/3194.0|19.40|-1,714.44|7627
2011/02/18 09:37:55|平多|3244.0/3248.6|0.51|-1,664.30|94
2011/02/22 13:54:35|平多|3201.4/3206.0|21.43|-1,656.58|7854
2011/02/23 09:37:00|平多|3184.0/3188.6|25.41|-1,653.41|8723
2011/03/03 13:33:45|平多|3238.2/3242.6|87.33|-1,603.21|2...
2011/02/22 13:32:55|平多|3198.6/3203.0|19.40|-1,596.05|7594
2011/02/28 13:26:35|平空|3187.4/3183.0|37.07|-1,588.15|8713`
  .split("\n")
  .map((l) => l.split("|"));
const summaryNums = ["-91.34%", "-99.94%", "10.89%", "257", "0.00%", "91.79%", "-1.09"];

const Value = ({ f }: { f: string }) => {
  const text = f.slice(1);
  return <Cell $c={f[0]}>{text === "–" ? <Dash>–</Dash> : text}</Cell>;
};

const IndicatorGlyph = () => (
  <svg width="16" height="15" viewBox="0 0 16 15" aria-hidden>
    <path d="M1 8h3v2h8V8h3v6H1zM4 12h8" fill="none" stroke="#201030" strokeWidth="1.200" />
    <path d="M4 6.500h8M5 4.500h5M6 1l4 2.500M6 1v3" fill="none" stroke="#601040" strokeWidth="1.200" />
  </svg>
);

const PeriodIcon = ({ kind }: { kind: number }) => (
  <svg width="15" height="13" viewBox="0 0 15 13" aria-hidden>
    <rect x=".5" y=".5" width="14" height="12" fill="#fff8e8" stroke="#c08820" />
    {kind ? (
      <path d="M2 9h2l2-3h2l2-1M11 2v9M13 2v9" fill="none" stroke="#d02020" strokeDasharray="2 1" />
    ) : (
      <>
        <path d="m1 3 3 3 3-3 3 3 4-3" fill="none" stroke="#d02020" />
        <path d="M3 12V8M6 12V9M9 12V7M12 12V8" stroke="#508020" strokeWidth="1.500" />
      </>
    )}
  </svg>
);

export default function App() {
  return (
    <Screen>
      <Global />
      <TitleBar>
        <AppIcon size={20} />
        <Title>金字塔决策交易系统 - [100081] - [动态显示牌]</Title>
        <Quick>
          {quick.map(([t, hot]) => (
            <QuickButton key={t} $hot={hot}>{t}</QuickButton>
          ))}
        </Quick>
        <SysButtons>
          <button aria-label="最小化"><MinGlyph /></button>
          <button aria-label="还原"><RestoreGlyph /></button>
          <button aria-label="关闭"><CloseGlyph s={16} w={1.6} /></button>
        </SysButtons>
      </TitleBar>

      <MenuBar>
        <DocIcon />
        {menus.map(([t, k]) => (
          <MenuItem key={t}>{t}(<u>{k}</u>)</MenuItem>
        ))}
        <Spacer />
        <SysButtons $flat>
          <button aria-label="最小化窗口"><MinGlyph flat /></button>
          <button aria-label="还原窗口"><RestoreGlyph s={10} /></button>
          <button aria-label="关闭窗口"><CloseGlyph s={9} w={2.4} /></button>
        </SysButtons>
      </MenuBar>

      <ToolArea>
        <ToolStrip>
          <Grip />
          {tools.map((n, i) =>
            n === "|" ? (
              <Sep key={i} />
            ) : n === "v" ? (
              <Tool key={i} $w={13} aria-label="更多"><Tri d="d" s={6} c={i < 14 ? "#888" : "#000"} /></Tool>
            ) : (
              <Tool key={i} $w={n === "move" ? 26 : 22} aria-label={n}><Art n={n} /></Tool>
            )
          )}
          <EndCap aria-label="工具栏选项"><MoreGlyph /></EndCap>
        </ToolStrip>
      </ToolArea>

      <Main>
        <Panel>
          <PanelHead>
            <h2>管理面板</h2>
            <Tri d="d" s={9} />
            <svg width="9" height="11" aria-hidden>
              <path d="M2.500 1v5M6 1v5M2 1.500h5M0 6.500h9M4.500 7v4" stroke="#000" fill="none" />
            </svg>
            <CloseGlyph s={10} w={2.4} />
          </PanelHead>
          <PanelTools>
            <button>新建公式 <Tri d="d" s={5} /></button>
            <button>编辑公式</button>
            <button>查找公</button>
          </PanelTools>
          <Tree>
            {tree.map((n, i) => (
              <TreeRow key={n.t} $leaf={n.d === 3} $open={!!n.open}>
                {n.lines.map((on, k) => <Guide key={k} on={on} />)}
                <Node first={i === 0} last={n.last} box={n.box} />
                {n.d === 3 ? <Smile /> : <Folder open={n.open} />}
                <span>{n.t}</span>
              </TreeRow>
            ))}
          </Tree>
          <HScroll>
            <Tri d="l" s={8} c="#444" />
            <Rest $grow={12} />
            <Thumb $grow={103}>
              <svg width="10" height="8" aria-hidden><path d="M1 0v8M5 0v8M9 0v8" stroke="#666" /></svg>
            </Thumb>
            <Rest $grow={59} />
            <Tri d="r" s={8} c="#444" />
          </HScroll>
          <PanelTabs>
            <PanelTab $on $w={59}><IndicatorGlyph />公式</PanelTab>
            <PanelTab $w={58}><Folder open />板块</PanelTab>
            <PanelTab $w={45}>
              <svg width="16" height="16" viewBox="0 0 16 16" aria-hidden>
                <path d="M1 2v9l4 3 5-3 5 1V3l-4 1-3 4-4-1z" fill="#304038" />
                <path d="m2 5 3 3M6 12l6-8M10 9l4 1" stroke="#30c0a0" strokeWidth="1.600" />
                <path d="m7 10 2-2M12 6l2-2" stroke="#d04030" strokeWidth="1.600" />
              </svg>
              高级
            </PanelTab>
            <PanelArrows><Tri d="l" s={9} c="#666" /><Tri d="r" s={9} c="#222" /></PanelArrows>
          </PanelTabs>
        </Panel>

        <Quotes>
          <QuoteBody>
            <QuoteTable>
              <colgroup>
                {widths.map((w, i) => <col key={i} width={w} />)}
                <col />
              </colgroup>
              <thead>
                <tr>
                  <th><FilterButton aria-label="筛选"><BigTri d="d" c={C.c} /></FilterButton></th>
                  <th><Cell $c="c">*</Cell></th>
                  {heads.map((h) => <th key={h}><Cell $c="c">{h}</Cell></th>)}
                  <th />
                </tr>
              </thead>
              <tbody>
                {quotes.map((line, i) => {
                  const [code, name, ...rest] = line.split(" ");
                  return (
                    <QuoteRow key={code} $on={i === 13}>
                      <td><Cell $c="y">{i + 1}</Cell></td>
                      <td />
                      <td><Cell $c="y">{code}</Cell></td>
                      <td><Cell $c="y"><Clip>{name}</Clip></Cell></td>
                      {rest.map((f, k) => <td key={k}><Value f={f} /></td>)}
                      <td />
                    </QuoteRow>
                  );
                })}
              </tbody>
            </QuoteTable>
            <VRail>
              <BigTri d="u" />
              <VHatch />
            </VRail>
          </QuoteBody>
          <MarketTabs>
            <Arrow $w={15} aria-label="前一组"><Tri d="l" s={10} c="#c80808" /></Arrow>
            <Arrow $w={14} aria-label="后一组"><Tri d="r" s={10} c="#c80808" /></Arrow>
            {markets.map((m) => (
              <MarketTab key={m} $on={m === "金融期货"}>
                <svg width="9" height="13" aria-hidden>
                  <polygon points="4.500,0 9,13 0,13" fill={C.c} />
                  <path d="M4 0 0 13" stroke="#e03030" />
                </svg>
                {m}
              </MarketTab>
            ))}
            <Arrow $w={13} aria-label="向左滚动"><BigTri d="l" /></Arrow>
            <HHatch />
            <Arrow $w={14} aria-label="向右滚动"><BigTri d="r" /></Arrow>
            <Arrow $w={15} aria-label="向下滚动"><BigTri d="d" /></Arrow>
          </MarketTabs>
          <Below />
        </Quotes>

        <Rail>
          <RailStrip>
            <RailDots />
            <RailButton aria-label="分时"><PeriodIcon kind={0} /></RailButton>
            <RailButton>Bn</RailButton>
            <RailButton aria-label="分笔"><PeriodIcon kind={1} /></RailButton>
            <RailButton>Sn</RailButton>
            <RailButton><Period>1′</Period></RailButton>
            <RailButton>Mn</RailButton>
            {["3′", "5′", "10′", "15′", "30′", "1h"].map((p) => (
              <RailButton key={p}><Period>{p}</Period></RailButton>
            ))}
            <RailButton>Hn</RailButton>
            <RailButton $on>日</RailButton>
            <RailButton>Dn</RailButton>
            {["周", "月", "季", "年"].map((p) => <RailButton key={p}>{p}</RailButton>)}
            <RailEnd><Tri d="r" s={7} /></RailEnd>
          </RailStrip>
          <Gauge><div /></Gauge>
        </Rail>
      </Main>

      <LinkBar>
        <LinkStrip>
          <Grip />
          {categories.map(([t, w, more]) => (
            <BarItem key={t} $w={w}>{t}{more && <Tri d="d" s={5} />}</BarItem>
          ))}
          <BarEnd aria-label="更多板块"><MoreGlyph /></BarEnd>
        </LinkStrip>
      </LinkBar>
      <LinkBar>
        <LinkStrip>
          <Grip />
          {indicators.map(([t, w]) => <BarItem key={t} $w={w}>{t}</BarItem>)}
          <BarEnd aria-label="更多指标"><MoreGlyph /></BarEnd>
        </LinkStrip>
      </LinkBar>

      <StatusBar>
        <Sections>
          {indexes.map((x) => (
            <Section key={x.n}>
              <span>{x.n}</span><em>{x.v}</em><span>{x.a}</span>
              <Breadth>
                <Split />
                <Marks>{x.m.split("").map((b, i) => <Mark key={i} $up={b === "1"} />)}</Marks>
              </Breadth>
            </Section>
          ))}
        </Sections>
        <StatusIcons>
          <span>
            <svg width="14" height="16" viewBox="0 0 14 16" aria-hidden>
              <path d="M2 1c7 0 10 4 9 9C5 10 1 7 2 1z" fill="#48b8c8" stroke="#104060" />
              <path d="m7 6 5-5M8 10l-2 5h6" stroke="#103050" fill="none" strokeWidth="1.400" />
            </svg>
          </span>
          <span>
            <svg width="12" height="14" viewBox="0 0 12 14" aria-hidden>
              <path d="M6 1c3 0 2 6 5 9H1c3-3 2-9 5-9zM5 12h2" fill="#b0b0b0" stroke="#303030" />
            </svg>
          </span>
          <span>
            <svg width="15" height="12" viewBox="0 0 15 12" aria-hidden>
              <path d="m1 5 6-4 7 5-6 5z" fill="#e8d830" stroke="#504808" />
              <path d="m4 7 7-3M5 3l6 5" stroke="#806c08" />
            </svg>
          </span>
          <span>
            <svg width="13" height="15" viewBox="0 0 13 15" aria-hidden>
              <path d="M2 3l3-2h7v11l-3 2H2z" fill="#a8a8a8" stroke="#303030" />
              <path d="M4 6h4M4 9h4" stroke="#303030" />
            </svg>
          </span>
          <time>09:02:24</time>
        </StatusIcons>
      </StatusBar>

      <Taskbar>
        <Start aria-label="开始">
          <svg width="43" height="43" viewBox="0 0 43 43" aria-hidden>
            <defs>
              <radialGradient id="orb" cx=".5" cy=".95" r=".95">
                <stop offset="0" stopColor="#40e0ff" />
                <stop offset=".45" stopColor="#1870a8" />
                <stop offset=".8" stopColor="#305878" />
                <stop offset="1" stopColor="#c0d4e4" />
              </radialGradient>
            </defs>
            <circle cx="21.500" cy="21.500" r="20.500" fill="url(#orb)" stroke="#a8d8f0" />
            <path d="M12 10c3-2 6-2 9 0l-2 10c-3-2-6-2-9 0z" fill="#f07030" />
            <path d="M23 11c3 2 7 2 11-1l-3 11c-4 2-7 2-10 0z" fill="#88c830" />
            <path d="M9 23c3-2 6-2 9 0l-2 9c-3-2-6-2-9 0z" fill="#50a0e8" />
            <path d="M20 24c3 2 7 2 10 0l-2 9c-4 2-7 2-10 0z" fill="#f8d040" />
          </svg>
        </Start>
        <Tasks>
          <Task aria-label="Internet Explorer">
            <svg width="40" height="40" viewBox="0 0 40 40" aria-hidden>
              <path
                d="M37 22H15c1 7 9 8 12 3h9C32 40 7 40 7 21 7 2 39 2 37 22zM15 17h13c-1-7-12-7-13 0z"
                fill="#1468c8"
                stroke="#0c3c80"
                fillRule="evenodd"
              />
              <path d="M5 37C-5 26 20-1 37 2c3 1 2 5 0 8 0-4-2-5-5-4C18 9 3 26 5 37z" fill="#f4c838" stroke="#c89010" strokeWidth=".6" />
            </svg>
          </Task>
          <Task aria-label="资源管理器">
            <svg width="40" height="40" viewBox="0 0 40 40" aria-hidden>
              <path d="M3 4h16l3 4h15v29H2z" fill="#f0d070" stroke="#c8a048" />
              <path d="M5 2h12v6H5zM22 5h12v5H22z" fill="#fff" stroke="#889" strokeWidth=".7" />
              <path d="M1 11h38v26H1z" fill="#f8e498" />
              <path d="M6 38V27c0-5 28-5 28 0v11h-7v-7H13v7z" fill="#a8dcf0" stroke="#60a8c8" />
            </svg>
          </Task>
          <Task aria-label="媒体播放器">
            <svg width="34" height="34" viewBox="0 0 34 34" aria-hidden>
              <path d="M7 1h25v30H7z" fill="#78b8e0" stroke="#b0d8f0" />
              <path d="M1 2h25v30H1z" fill="#b8dcf4" stroke="#e0f0ff" />
              <circle cx="14" cy="17" r="11" fill="#f07020" />
              <path d="m9 10 13 7-13 7z" fill="#fff" />
            </svg>
          </Task>
          <Task aria-label="播放器">
            <svg width="42" height="40" viewBox="0 0 42 40" aria-hidden>
              <path d="M9 2c0-3 31 14 31 18S12 40 10 38z" fill="#38a8e8" stroke="#1878b8" />
              <path d="M2 5h12v28H4z" fill="#f08018" />
              <path d="M6 6c1-2 27 12 27 15S10 38 8 36z" fill="#60b818" />
              <path d="m13 13 12 7-12 8z" fill="#fff" />
            </svg>
          </Task>
          <Task $state="active" aria-label="金字塔">
            <svg width="40" height="40" viewBox="0 0 40 40" aria-hidden>
              <path d="M2 2h36v36H2z" fill="#fff" stroke="#f00000" strokeWidth="4" />
              <path d="M8 20V9h24v4M12 18v-4h10" fill="none" stroke="#f00000" strokeWidth="2.500" />
              <path d="m7 26 22-18 6 6-20 19-9 1z" fill="#f00000" />
              <path d="m8 27 5 5m0-5-5 5M10.500 26v7" stroke="#fff" strokeWidth="1.500" />
              <path d="M30 21c3 2 5 2 8 2 0 8-2 13-8 15-6-2-8-7-8-15 3 0 5 0 8-2z" fill="#3070c0" stroke="#e8e8e8" />
              <path d="M30 22v8h7c0-3 1-5 0-7-3 0-5 0-7-1zM30 30h-7c1 4 3 7 7 8z" fill="#f8d048" />
            </svg>
          </Task>
          <Task $state="open" aria-label="画图">
            <svg width="40" height="40" viewBox="0 0 40 40" aria-hidden>
              <path d="M2 24C2 12 14 6 24 7c12 1 14 12 10 20-4 8-12 10-13 5-1-4-5-4-8-1-4 3-11 0-11-7z" fill="#e4eef6" stroke="#90b0c8" />
              <circle cx="8" cy="21" r="3" fill="#e04030" />
              <circle cx="13" cy="15" r="3" fill="#48b040" />
              <circle cx="21" cy="12" r="3" fill="#f0c030" />
              <circle cx="17" cy="23" r="2.500" fill="#60a8d8" />
              <path d="M32 1 39 4l-3 8-5-2z" fill="#b07840" />
              <path d="m31 10 4 2-13 27-3-1z" fill="#e08830" />
            </svg>
          </Task>
        </Tasks>
        <Tray>
          <TrayItem $w={26} $high>CH</TrayItem>
          <TrayItem $w={28} $high>
            <svg width="20" height="16" viewBox="0 0 20 16" aria-hidden>
              <path d="M1 6h18v9H1z" fill="#e8e8e8" stroke="#909090" />
              <path d="M3 9h14M3 12h14" stroke="#505050" strokeDasharray="2 1" strokeWidth="1.500" />
              <path d="M8 6c0-6 6 0 8-6" fill="none" stroke="#808080" />
            </svg>
          </TrayItem>
          <TrayItem $w={26} $high><Art n="help" s={18} /></TrayItem>
          <TrayItem $w={20} $high><RestoreGlyph s={8} c="#fff" /><Tri d="d" s={6} c="#fff" /></TrayItem>
          <Lines $w={94}>38℃<br />CPU温度</Lines>
          <TrayItem $w={31}><Tri d="u" s={9} c="#fff" /></TrayItem>
          <TrayItem $w={30}>
            <svg width="19" height="20" viewBox="0 0 19 20" aria-hidden>
              <path d="M2 1v18" stroke="#fff" strokeWidth="2" />
              <path d="M3 2c4-2 6 2 11 0v9c-5 2-7-2-11 0z" fill="#fff" />
              <circle cx="13" cy="14" r="5" fill="#d82818" />
              <path d="m11 12 4 4m0-4-4 4" stroke="#fff" strokeWidth="1.600" />
            </svg>
          </TrayItem>
          <TrayItem $w={30}>
            <svg width="19" height="20" viewBox="0 0 19 20" aria-hidden>
              <path d="M2 4h9v14H2zM5 1h3v3H5z" fill="#8098b0" stroke="#fff" strokeWidth="1.600" />
              <path d="M12 5h6v5h-6zM13 2v3M17 2v3M15 10v7h-3" fill="#fff" stroke="#fff" strokeWidth="1.400" />
            </svg>
          </TrayItem>
          <TrayItem $w={30}>
            <svg width="18" height="16" viewBox="0 0 18 16" aria-hidden>
              <path d="M2 16v-4M6 16V9M10 16V6M14 16V1" stroke="#fff" strokeWidth="2.400" />
            </svg>
          </TrayItem>
          <TrayItem $w={33}>
            <svg width="20" height="18" viewBox="0 0 20 18" aria-hidden>
              <path d="M1 6h4l5-5v16l-5-5H1z" fill="#fff" />
              <path d="M12 6c1 2 1 4 0 6M15 4c2 3 2 7 0 10M18 2c2 4 2 10 0 14" fill="none" stroke="#c8dcf0" />
            </svg>
          </TrayItem>
          <Lines $w={94}>9:02<br />2016/1/5</Lines>
          <Peek aria-label="显示桌面" />
        </Tray>
      </Taskbar>

      <Dialog role="dialog" aria-label="公式测试系统">
        <DialogTitle>
          <svg width="18" height="15" viewBox="0 0 18 15" aria-hidden>
            <rect width="18" height="15" fill="#f4f8f8" />
            <rect x="1" y="3" width="9" height="10" fill="#3090a0" />
            <path d="M12 4h5M12 7h3M12 10h3" stroke="#a0b8c0" />
          </svg>
          <h2>公式测试系统 - 1.指标交易 : MA均线交易系统(5,15,1) 多秒(5)</h2>
          <CaptionButtons>
            <Caption aria-label="最小化对话框">
              <svg width="16" height="12" aria-hidden><rect x="1" y="7" width="14" height="4" fill="#fff" stroke="#404448" /></svg>
            </Caption>
            <Caption aria-label="最大化对话框">
              <svg width="17" height="13" aria-hidden><rect x="2.500" y="2.500" width="12" height="8" fill="none" stroke="#fff" strokeWidth="3" /></svg>
            </Caption>
            <Caption $close aria-label="关闭对话框"><CloseGlyph s={14} c="#fff" w={3.4} /></Caption>
          </CaptionButtons>
        </DialogTitle>
        <DialogBody>
          <DialogTools>
            <Tabs>
              {["摘要", "报告", "明细", "分布", "收益", "频谱", "统计", "设定"].map((t) => (
                <Tab key={t} $on={t === "明细"}>{t}</Tab>
              ))}
            </Tabs>
            <Save>保存(S)...</Save>
          </DialogTools>
          <ListFrame>
            <ListTop>
              <ListClip>
                <ListTable $pitch={16} $lead={3}>
                  <colgroup>
                    {[168, 162, 60, 130, 64, 90, 100, 47].map((w, i) => <col key={i} width={w} />)}
                    <col />
                  </colgroup>
                  <thead>
                    <tr>
                      <th>时间</th><th>名称</th><th>类型</th><th>交易价/成本价</th>
                      <NumHead>交易量</NumHead><NumHead>最大回撤%</NumHead><NumHead>收益 ∕</NumHead><NumHead>序列</NumHead><th />
                    </tr>
                  </thead>
                  <tbody>
                    {trades.map(([time, type, price, draw, profit, seq], i) => (
                      <TradeRow key={i} $on={i === 0}>
                        <td>{time}</td><Cjk>300股指连续</Cjk><Cjk>{type}</Cjk><td>{price}</td>
                        <Num>1</Num><Num>{draw}</Num><Num>{profit}</Num>
                        {seq === "2..." ? <td>{seq}</td> : <Num>{seq}</Num>}
                        <td />
                      </TradeRow>
                    ))}
                  </tbody>
                </ListTable>
              </ListClip>
              <VScroll>
                <Tri d="u" s={9} c="#333" />
                <VThumb>
                  <svg width="8" height="10" aria-hidden><path d="M0 1.500h8M0 5.500h8M0 9.500h8" stroke="#555" /></svg>
                </VThumb>
                <Tri d="d" s={9} c="#555" />
              </VScroll>
            </ListTop>
            <HScroll>
              <Tri d="l" s={8} c="#333" />
              <Rest $grow={10} />
              <Thumb $grow={668}>
                <svg width="10" height="9" aria-hidden><path d="M1 0v9M5 0v9M9 0v9" stroke="#666" /></svg>
              </Thumb>
              <Rest $grow={122} />
              <Tri d="r" s={8} c="#333" />
              <Rest $grow={20} />
            </HScroll>
          </ListFrame>
          <Summary>
            <ListTable $pitch={17} $lead={4}>
              <colgroup>
                <col width={92} />
                {summaryNums.map((n) => <col key={n} width={70} />)}
                <col />
              </colgroup>
              <thead>
                <tr>
                  <th>名称</th><NumHead>利润率</NumHead><NumHead>年回报</NumHead><NumHead>胜率</NumHead><NumHead>交易数</NumHead>
                  <NumHead>成功率</NumHead><th>最大回...</th><th>MAR...</th><th />
                </tr>
              </thead>
              <tbody>
                <SummaryRow $tone="green">
                  <td><NameCell><Folder open />全部综合</NameCell></td>
                  {summaryNums.map((n) => <Num key={n}>{n}</Num>)}
                  <td />
                </SummaryRow>
                <SummaryRow $tone="sel">
                  <td><NameCell><b>S</b>300股...</NameCell></td>
                  {summaryNums.map((n) => <Num key={n}>{n}</Num>)}
                  <td />
                </SummaryRow>
                {[0, 1, 2, 3, 4, 5, 6].map((k) => (
                  <SummaryRow key={k} $tone="blank">
                    <td />
                    {summaryNums.map((n) => <td key={n} />)}
                    <td />
                  </SummaryRow>
                ))}
              </tbody>
            </ListTable>
          </Summary>
          <DialogFoot>
            <span>如果对评测结果有疑问，请点击</span>
            <a href="#faq">这里</a>
            <span>看常见问题的12、21</span>
            <a href="#terms">点这里看报告名词术语的详细解释</a>
          </DialogFoot>
        </DialogBody>
      </Dialog>
    </Screen>
  );
}
